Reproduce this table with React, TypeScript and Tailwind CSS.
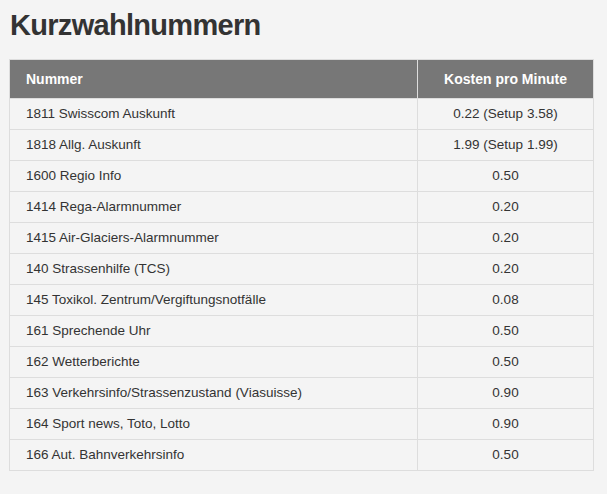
import React from 'react';

const rows: [string, string][] = [
  ['1811 Swisscom Auskunft', '0.22 (Setup 3.58)'],
  ['1818 Allg. Auskunft', '1.99 (Setup 1.99)'],
  ['1600 Regio Info', '0.50'],
  ['1414 Rega-Alarmnummer', '0.20'],
  ['1415 Air-Glaciers-Alarmnummer', '0.20'],
  ['140 Strassenhilfe (TCS)', '0.20'],
  ['145 Toxikol. Zentrum/Vergiftungsnotfälle', '0.08'],
  ['161 Sprechende Uhr', '0.50'],
  ['162 Wetterberichte', '0.50'],
  ['163 Verkehrsinfo/Strassenzustand (Viasuisse)', '0.90'],
  ['164 Sport news, Toto, Lotto', '0.90'],
  ['166 Aut. Bahnverkehrsinfo', '0.50'],
];

export default function App() {
  return (
    <div
      className="min-h-[494px] bg-[#f4f4f4] pl-[9px] pr-[13px] pt-[7px] text-[#333]"
      style={{ fontFamily: "'Liberation Sans', Arial, sans-serif" }}
    >
      {/* Titel */}
      <h1 className="pl-px text-[29px] font-bold leading-[36px] tracking-[-0.7px] text-[#333]">
        Kurzwahlnummern
      </h1>

      <table className="mt-[16px] w-full border-collapse border border-[#ddd] text-[13.5px]">
        <thead>
          <tr className="h-[39px] bg-[#777] text-[14px] text-white">
            <th className="border border-[#ddd] pl-4 text-left font-bold">Nummer</th>
            <th className="w-[176px] border border-[#ddd] text-center font-bold">Kosten pro Minute</th>
          </tr>
        </thead>
        <tbody>
          {rows.map(([name, cost]) => (
            <tr key={name} className="h-[31px]">
              <td className="border border-[#ddd] pl-4">{name}</td>
              <td className="border border-[#ddd] text-center">{cost}</td>
            </tr>
          ))}
        </tbody>
      </table>
    </div>
  );
}
